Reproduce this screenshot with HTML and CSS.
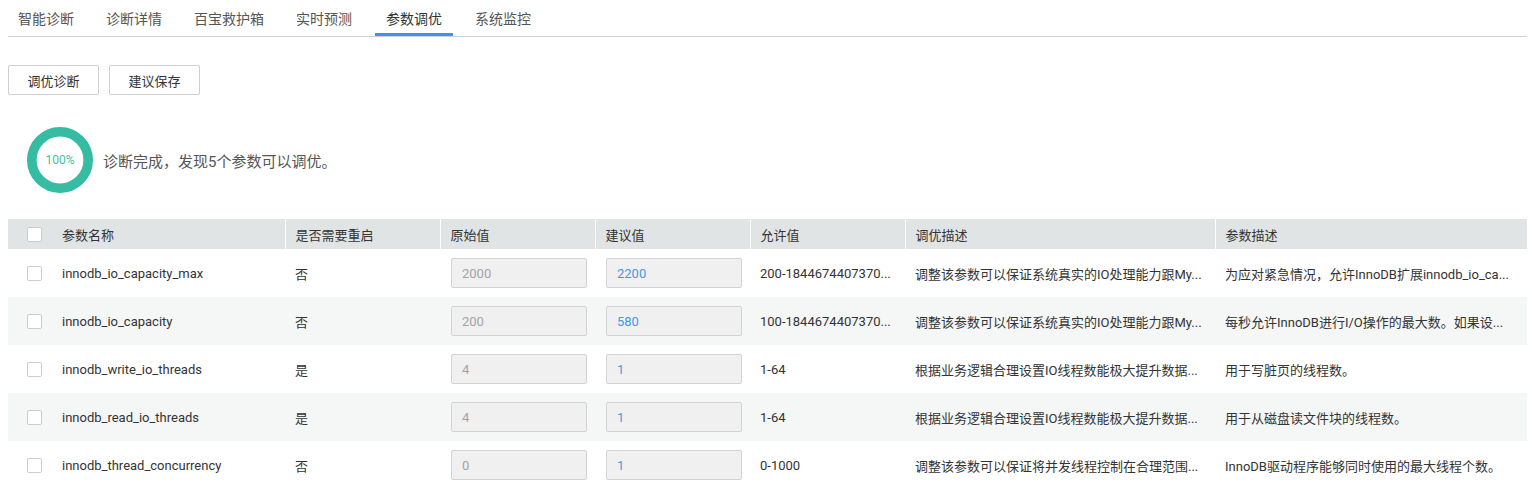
FILE: index.html
```html
<!DOCTYPE html>
<html lang="zh-CN">
<head>
<meta charset="utf-8">
<title>参数调优</title>
<link rel="stylesheet" href="styles.css">
</head>
<body>
<div class="page">
  <nav class="tabs">
    <a class="tab">智能诊断</a>
    <a class="tab">诊断详情</a>
    <a class="tab">百宝救护箱</a>
    <a class="tab">实时预测</a>
    <a class="tab active">参数调优</a>
    <a class="tab">系统监控</a>
  </nav>

  <div class="toolbar">
    <button class="btn">调优诊断</button>
    <button class="btn">建议保存</button>
  </div>

  <div class="status">
    <div class="ring">
      <svg width="66" height="66" viewBox="0 0 66 66">
        <circle cx="33" cy="33" r="28.2" fill="none" stroke="#35bca2" stroke-width="9.6"/>
      </svg>
      <span class="ring-text">100%</span>
    </div>
    <span class="status-text">诊断完成，发现5个参数可以调优。</span>
  </div>

  <table class="grid">
    <colgroup>
      <col class="c-check">
      <col class="c-name">
      <col class="c-mid">
      <col class="c-mid">
      <col class="c-mid">
      <col class="c-mid">
      <col class="c-desc">
      <col>
    </colgroup>
    <thead>
      <tr>
        <th class="chk"><span class="box"></span></th>
        <th class="first">参数名称</th>
        <th>是否需要重启</th>
        <th>原始值</th>
        <th>建议值</th>
        <th>允许值</th>
        <th>调优描述</th>
        <th>参数描述</th>
      </tr>
    </thead>
    <tbody>
      <tr>
        <td class="chk"><span class="box"></span></td>
        <td class="first">innodb_io_capacity_max</td>
        <td>否</td>
        <td><span class="field orig">2000</span></td>
        <td><span class="field sugg">2200</span></td>
        <td>200-1844674407370...</td>
        <td>调整该参数可以保证系统真实的IO处理能力跟My...</td>
        <td>为应对紧急情况，允许InnoDB扩展innodb_io_ca...</td>
      </tr>
      <tr>
        <td class="chk"><span class="box"></span></td>
        <td class="first">innodb_io_capacity</td>
        <td>否</td>
        <td><span class="field orig">200</span></td>
        <td><span class="field sugg">580</span></td>
        <td>100-1844674407370...</td>
        <td>调整该参数可以保证系统真实的IO处理能力跟My...</td>
        <td>每秒允许InnoDB进行I/O操作的最大数。如果设...</td>
      </tr>
      <tr>
        <td class="chk"><span class="box"></span></td>
        <td class="first">innodb_write_io_threads</td>
        <td>是</td>
        <td><span class="field orig">4</span></td>
        <td><span class="field sugg">1</span></td>
        <td>1-64</td>
        <td>根据业务逻辑合理设置IO线程数能极大提升数据...</td>
        <td>用于写脏页的线程数。</td>
      </tr>
      <tr>
        <td class="chk"><span class="box"></span></td>
        <td class="first">innodb_read_io_threads</td>
        <td>是</td>
        <td><span class="field orig">4</span></td>
        <td><span class="field sugg">1</span></td>
        <td>1-64</td>
        <td>根据业务逻辑合理设置IO线程数能极大提升数据...</td>
        <td>用于从磁盘读文件块的线程数。</td>
      </tr>
      <tr>
        <td class="chk"><span class="box"></span></td>
        <td class="first">innodb_thread_concurrency</td>
        <td>否</td>
        <td><span class="field orig">0</span></td>
        <td><span class="field sugg">1</span></td>
        <td>0-1000</td>
        <td>调整该参数可以保证将并发线程控制在合理范围...</td>
        <td>InnoDB驱动程序能够同时使用的最大线程个数。</td>
      </tr>
    </tbody>
  </table>
</div>
</body>
</html>
```

FILE: styles.css
```css
* { box-sizing: border-box; }

html, body {
  margin: 0;
  padding: 0;
  background: #fff;
  overflow: hidden;
}

body {
  font-family: Roboto, "Noto Sans CJK SC", sans-serif;
  color: #333;
  font-size: 13px;
}

.page {
  padding: 0 5px 0 8px;
}

.tabs {
  display: flex;
  gap: 12px;
  height: 37px;
  border-bottom: 1px solid #cfd2d4;
}

.tab {
  display: block;
  height: 36px;
  padding: 0 10px;
  font-size: 14px;
  line-height: 38px;
  color: #555;
  border-bottom: 3px solid transparent;
}

.tab.active {
  color: #333;
  border-bottom-color: #3d94ea;
  padding: 0 11px 0 11px;
  margin-left: 1px;
}

.toolbar {
  display: flex;
  gap: 10px;
  margin-top: 28px;
}

.btn {
  width: 91px;
  height: 30px;
  border: 1px solid #cfcfcf;
  border-radius: 2px;
  background: #fff;
  font-family: Roboto, "Noto Sans CJK SC", sans-serif;
  font-size: 13px;
  color: #333;
  padding: 0;
}

.status {
  display: flex;
  align-items: center;
  gap: 10px;
  margin-top: 32px;
  padding-left: 19px;
}

.ring {
  position: relative;
  width: 66px;
  height: 66px;
}

.ring svg { display: block; }

.ring-text {
  position: absolute;
  inset: 0;
  display: flex;
  align-items: center;
  justify-content: center;
  font-size: 12px;
  color: #3ebfa5;
}

.status-text {
  font-size: 15px;
  color: #555;
}

.grid {
  width: 1519px;
  margin-top: 26px;
  border-collapse: collapse;
  table-layout: fixed;
}

.c-check { width: 44px; }
.c-name { width: 233px; }
.c-mid { width: 155px; }
.c-desc { width: 310px; }

.grid th {
  height: 30px;
  background: #e1e4e5;
  font-weight: normal;
  text-align: left;
  color: #333;
  padding: 0 10px;
  border-left: 1px solid #fff;
  white-space: nowrap;
}

.grid th.chk, .grid th.first { border-left: none; }

.grid td {
  height: 48px;
  padding: 0 10px;
  color: #333;
  white-space: nowrap;
  overflow: hidden;
}

.grid tbody tr:nth-child(even) td { background: #f5f7f7; }

.grid .chk {
  padding: 0 0 0 19px;
  line-height: 0;
}

.box {
  display: inline-block;
  width: 15px;
  height: 15px;
  border: 1px solid #ccc;
  border-radius: 2px;
  background: #fff;
  vertical-align: middle;
}

.field {
  display: flex;
  align-items: center;
  width: 136px;
  height: 30px;
  margin-left: 1px;
  padding: 0 10px;
  border: 1px solid #d3d3d3;
  border-radius: 2px;
  background: #f0f0f0;
}

.field.orig { color: #a3a3a3; }
.field.sugg { color: #4598e8; }
```
